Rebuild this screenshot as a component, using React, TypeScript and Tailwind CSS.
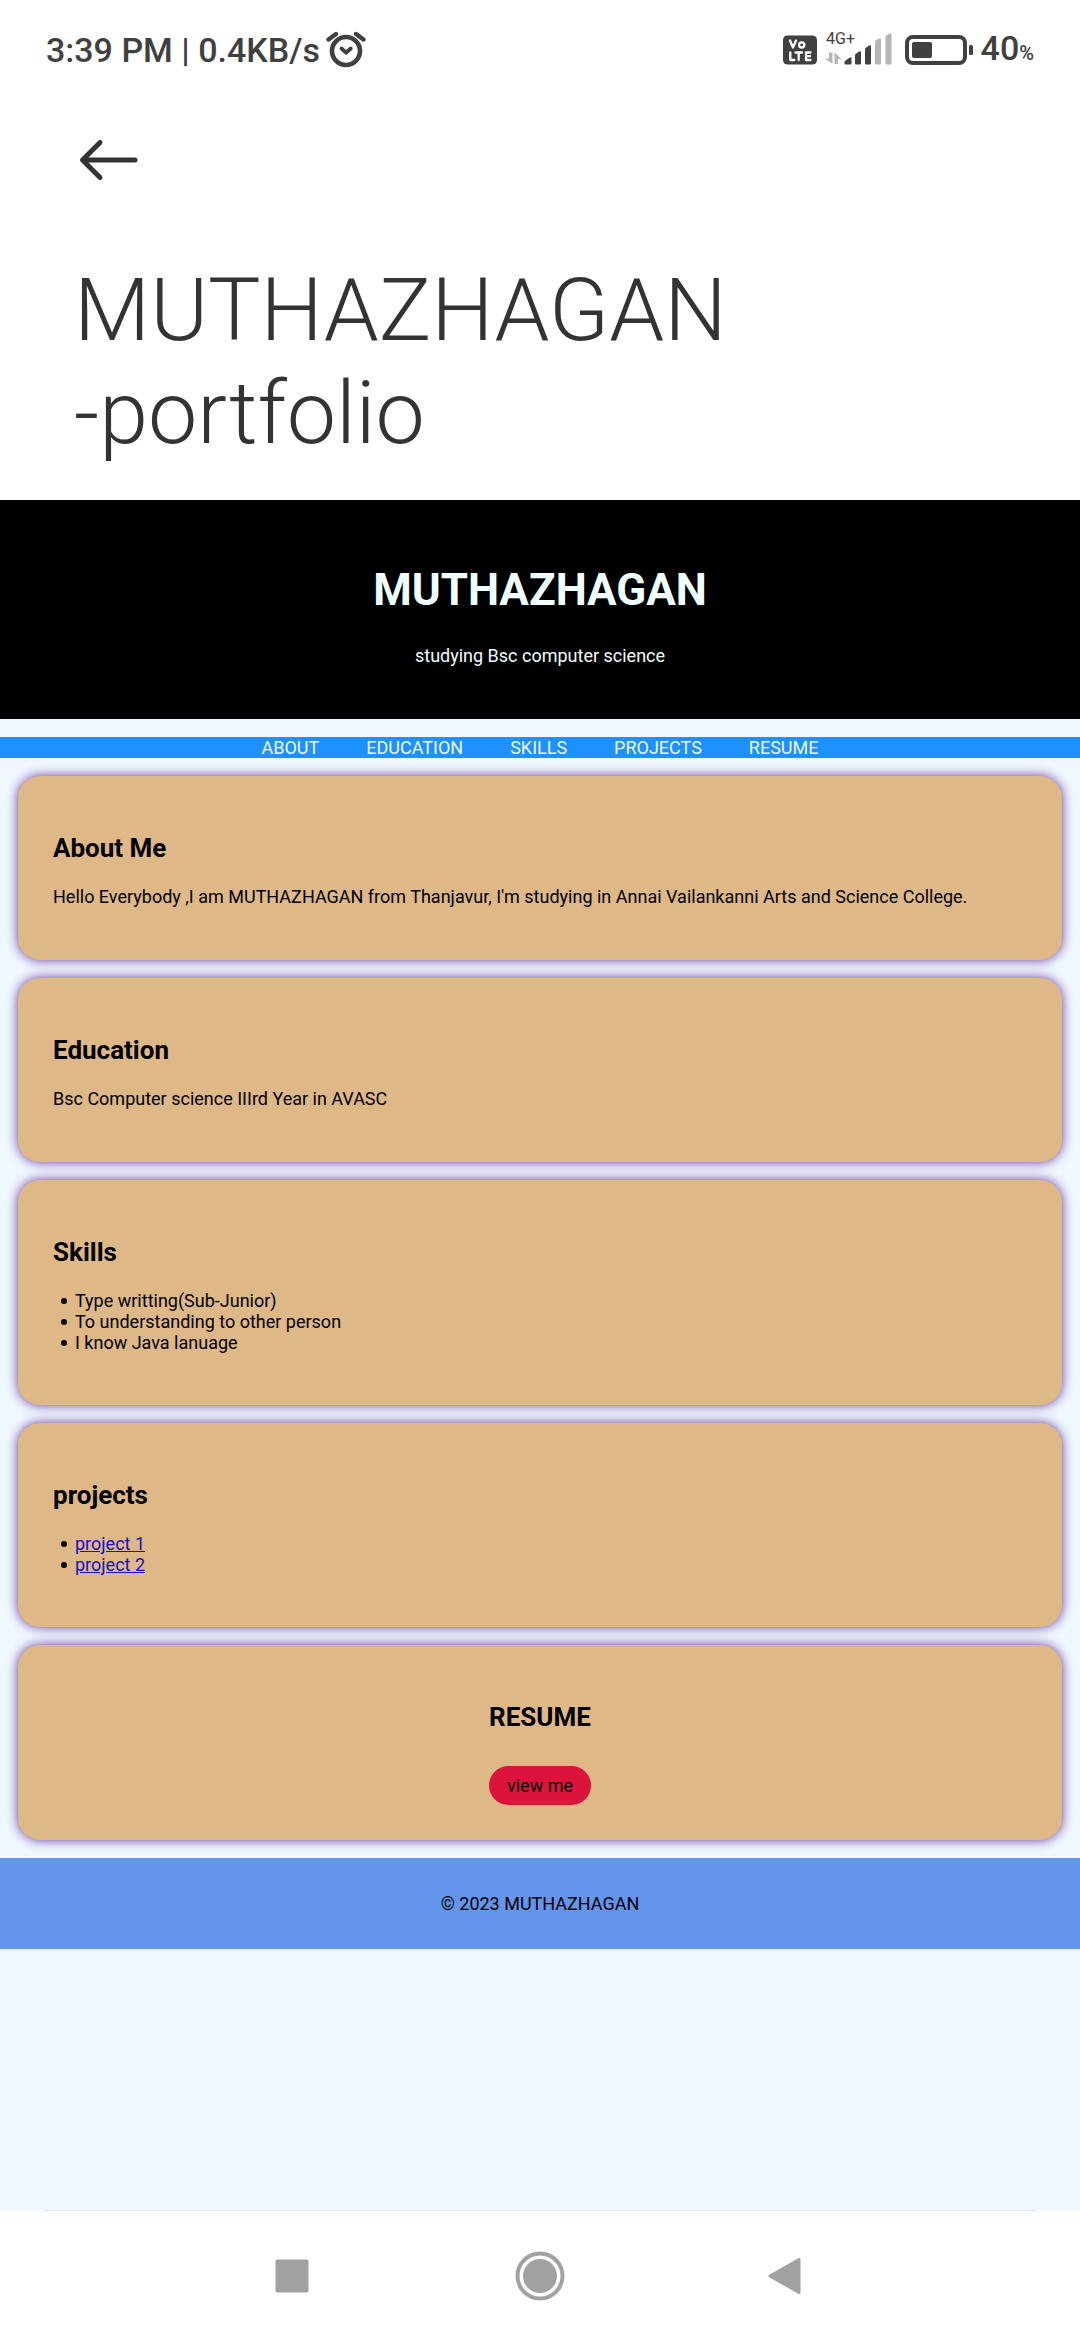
import type { ReactNode } from "react";

const navItems = ["ABOUT", "EDUCATION", "SKILLS", "PROJECTS", "RESUME"];
const skills = ["Type writting(Sub-Junior)", "To understanding to other person", "I know Java lanuage"];
const projects = ["project 1", "project 2"];

function AlarmIcon() {
  return (
    <svg width="40" height="38" viewBox="0 0 40 38" fill="none" stroke="#404040" strokeLinecap="round" aria-hidden="true">
      <circle cx="20" cy="20" r="14" strokeWidth="4.6" />
      <path d="M2.500 8.500 10 3M37.500 8.500 30 3" strokeWidth="4.4" />
      <path d="m15.500 17.500 4.500 4.200 4.800-4.200" strokeWidth="3.800" strokeLinejoin="round" />
    </svg>
  );
}

function VolteIcon() {
  return (
    <svg width="34" height="30" viewBox="0 0 34 30" role="img" aria-label="VoLTE">
      <rect y="0.500" width="34" height="29" rx="4.500" fill="#404040" />
      <g fill="none" stroke="#fff" strokeWidth="2.300" strokeLinecap="round" strokeLinejoin="round">
        <path d="m7 5.500 3 7 3-7" />
        <circle cx="18.700" cy="10" r="2.600" />
        <path d="M7.300 17.500v7.500h4M12.500 17.500h6.500M15.700 17.500v7.500M27.500 17.500h-4.500v7.500h4.500M23 21.200h4" />
      </g>
    </svg>
  );
}

function SignalIcon() {
  return (
    <svg width="68" height="44" viewBox="0 -3 68 44" role="img" aria-label="Mobile signal">
      <text x="1" y="13" fontFamily="Roboto, sans-serif" fontSize="16" fontWeight="400" fill="#404040">4G+</text>
      <g fill="#b5b5b5">
        <path d="M4 21.500h3.500v11.500L0 27.500h4z" />
        <path d="M9.500 33v-11.500l7 6.500h-3.500v5z" />
        <path d="M50 32.500V11q0-1 1-1.700l3-1.800q2-.7 2 1v24q0 1-1 1h-4q-1 0-1-1z" />
        <path d="M60.500 32.500V6q0-1 1-1.700l3-1.800q2-.7 2 1v29q0 1-1 1h-4q-1 0-1-1z" />
      </g>
      <g fill="#404040">
        <path d="M19.500 32.500v-1.200q0-1 .8-1.600l4.200-3q2-1 2 1v4.800q0 1-1 1h-5q-1 0-1-1z" />
        <path d="M30 32.500V24.500q0-1 .9-1.700l3.200-2.200q1.900-.9 1.900 1v10.900q0 1-1 1h-4q-1 0-1-1z" />
        <path d="M40 32.500V18.500q0-1 .9-1.700l3.200-2.200q1.900-.9 1.900 1v16.900q0 1-1 1h-4q-1 0-1-1z" />
      </g>
    </svg>
  );
}

function BatteryIcon() {
  return (
    <svg width="68" height="30" viewBox="0 0 68 30" role="img" aria-label="Battery">
      <rect x="2" y="2" width="58" height="26" rx="6" fill="none" stroke="#404040" strokeWidth="4" />
      <rect x="7" y="7" width="20" height="16" rx="2" fill="#404040" />
      <rect x="64" y="10" width="4" height="10" rx="1.500" fill="#404040" />
    </svg>
  );
}

function Card({ id, title, centered = false, children }: { id: string; title: string; centered?: boolean; children: ReactNode }) {
  return (
    <section
      id={id}
      className={`rounded-[22px] bg-[#deb887] px-[35px] pt-[57px] pb-[35px] shadow-[0_0_12px_#663399] ${centered ? "text-center" : ""}`}
    >
      <h2 className="mb-[22px] text-[26px] leading-[31px] font-bold">{title}</h2>
      {children}
    </section>
  );
}

function BulletList({ items }: { items: ReactNode[] }) {
  return (
    <ul className="mb-[17px] pl-2">
      {items.map((item, index) => (
        <li key={index} className="flex items-center gap-2 before:size-[6px] before:rounded-full before:bg-black">
          <span>{item}</span>
        </li>
      ))}
    </ul>
  );
}

export default function App() {
  return (
    <div className="flex min-h-screen flex-col bg-white font-['Roboto',sans-serif] text-[18px] leading-[21px] text-black">
      <div className="flex h-[100px] items-center justify-between px-[46px] text-[34px] leading-[40px] font-medium text-[#404040]">
        <div className="flex items-center gap-[6px]">
          <span>3:39 PM | 0.4KB/s</span>
          <AlarmIcon />
        </div>
        <div className="flex items-center">
          <VolteIcon />
          <span className="ml-2 flex"><SignalIcon /></span>
          <span className="ml-3 flex"><BatteryIcon /></span>
          <span className="ml-2">40<span className="text-[20px]">%</span></span>
        </div>
      </div>

      <header className="px-[74px] pb-9 text-[#333333]">
        <button type="button" aria-label="Back" className="mt-9 flex h-12 items-center pl-1">
          <svg width="60" height="44" viewBox="0 0 60 44" fill="none" stroke="currentColor" strokeWidth="5" strokeLinecap="round" strokeLinejoin="round">
            <path d="M5 22h52M22 4.500 4.500 22 22 39.500" />
          </svg>
        </button>
        <h1 className="mt-[74px] text-[88px] leading-[103px] font-light">
          MUTHAZHAGAN
          <br />
          -portfolio
        </h1>
      </header>

      <main className="grow bg-[#f0f8ff]">
        <div className="bg-black pt-[65px] pb-[53px] text-center text-[#f0ffff]">
          <h2 className="text-[44px] leading-[51px] font-bold">MUTHAZHAGAN</h2>
          <p className="mt-[29px]">studying Bsc computer science</p>
        </div>

        <nav className="my-[18px] flex justify-center gap-[47px] bg-[#1e90ff] text-[#f0f8ff]">
          {navItems.map((item) => (
            <a key={item} href={`#${item.toLowerCase()}`}>{item}</a>
          ))}
        </nav>

        <div className="flex flex-col gap-[18px] px-[18px]">
          <Card id="about" title="About Me">
            <p className="mb-[18px]">
              Hello Everybody ,I am MUTHAZHAGAN from Thanjavur, I'm studying in Annai Vailankanni Arts and Science College.
            </p>
          </Card>
          <Card id="education" title="Education">
            <p className="mb-[18px]">Bsc Computer science IIIrd Year in AVASC</p>
          </Card>
          <Card id="skills" title="Skills">
            <BulletList items={skills} />
          </Card>
          <Card id="projects" title="projects">
            <BulletList
              items={projects.map((project) => (
                <a href="#projects" className="text-[#1a0dc8] underline">{project}</a>
              ))}
            />
          </Card>
          <Card id="resume" title="RESUME" centered>
            <div className="flex justify-center pt-[11px]">
              <button type="button" className="rounded-full bg-[#dc143c] px-[18px] py-[9px]">view me</button>
            </div>
          </Card>
        </div>

        <footer className="mt-[18px] bg-[#6495ed] py-[35px] text-center">© 2023 MUTHAZHAGAN</footer>
      </main>

      <div className="px-11">
        <div className="flex h-[130px] items-center justify-center gap-[198px] border-t border-[#e5e5e5] text-[#a1a1a1]">
          <button type="button" aria-label="Recent apps">
            <svg width="50" height="50" viewBox="0 0 50 50" fill="currentColor"><rect x="8.500" y="8.500" width="33" height="33" rx="2" /></svg>
          </button>
          <button type="button" aria-label="Home">
            <svg width="50" height="50" viewBox="0 0 50 50">
              <circle cx="25" cy="25" r="22.500" fill="none" stroke="currentColor" strokeWidth="4" />
              <circle cx="25" cy="25" r="17" fill="currentColor" />
            </svg>
          </button>
          <button type="button" aria-label="Go back">
            <svg width="50" height="50" viewBox="0 0 50 50" fill="currentColor" stroke="currentColor" strokeWidth="3" strokeLinejoin="round">
              <path d="M7 25 36 8.500v33z" />
            </svg>
          </button>
        </div>
      </div>
    </div>
  );
}
